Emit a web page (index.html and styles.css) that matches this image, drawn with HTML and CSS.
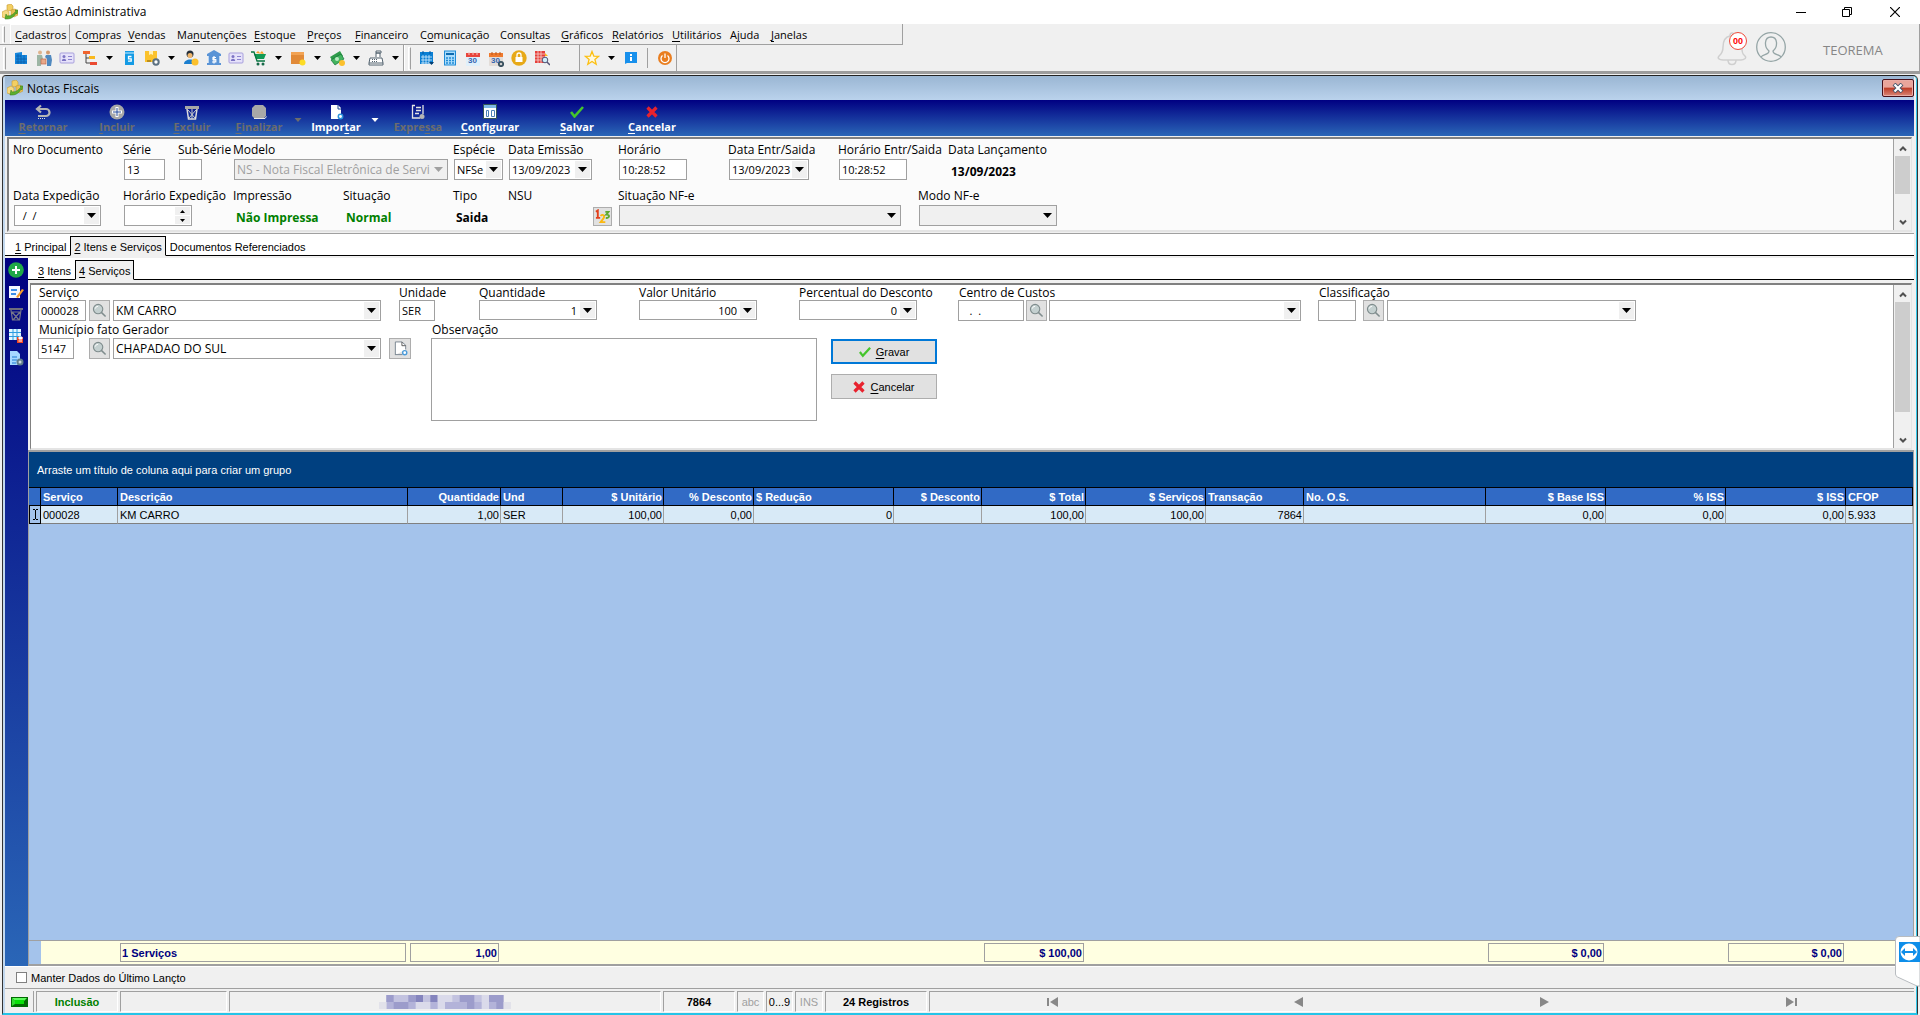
FILE: index.html
```html
<!DOCTYPE html>
<html lang="pt-BR">
<head>
<meta charset="utf-8">
<title>Gestão Administrativa</title>
<link rel="stylesheet" href="styles.css">
</head>
<body>
<svg class="defs" aria-hidden="true">
  <symbol id="app" viewBox="0 0 16 16"><path d="M5 1l4-1 2 2v4l-4 1-2-1z" fill="#f3cf63" stroke="#c79a30" stroke-width=".6"/><path d="M0 8l4-2 3 2v4l-4 2-3-1z" fill="#f6da82" stroke="#c79a30" stroke-width=".6"/><path d="M9 6l4-1 3 2v4l-4 2-3-2z" fill="#e9bf55" stroke="#c79a30" stroke-width=".6"/><path d="M3 15l1-5 1 2c4 0 7-2 9-5l-1-1h3l-1 4-1-1c-2 4-5 6-9 6z" fill="#5cae2c" stroke="#2f7a14" stroke-width=".5"/></symbol>
  <symbol id="down" viewBox="0 0 9 5"><path d="M0 0h9L4.500 5z" fill="currentColor"/></symbol>
  <symbol id="small-down" viewBox="0 0 7 4"><path d="M0 0h7L3.500 4z" fill="currentColor"/></symbol>
  <symbol id="up" viewBox="0 0 5 3"><path d="M0 3h5L2.500 0z" fill="currentColor"/></symbol>
  <symbol id="down5" viewBox="0 0 5 3"><path d="M0 0h5L2.500 3z" fill="currentColor"/></symbol>
  <symbol id="chev-up" viewBox="0 0 8 7"><path d="M1 5.500l3-3 3 3" fill="none" stroke="#505050" stroke-width="2"/></symbol>
  <symbol id="chev-down" viewBox="0 0 8 7"><path d="M1 1.500l3 3 3-3" fill="none" stroke="#505050" stroke-width="2"/></symbol>
  <symbol id="lens" viewBox="0 0 16 16"><circle cx="6.500" cy="6.500" r="5" fill="#c4d0d0" stroke="#7f8c8d" stroke-width="1.200"/><path d="M10 10l4.500 4.500" stroke="#7f8c8d" stroke-width="1.600"/><path d="M3.500 6a3 3 0 0 1 3-2.500" fill="none" stroke="#fff"/></symbol>
  <symbol id="check" viewBox="0 0 14 12"><path d="M1 6l3.500 4.500L13 1" fill="none" stroke="#45c52c" stroke-width="2.600"/></symbol>
  <symbol id="cross" viewBox="0 0 12 12"><path d="M1.500 1.500l9 9M10.500 1.500l-9 9" stroke="#e8222e" stroke-width="3.200"/></symbol>
  <symbol id="card" viewBox="0 0 16 16"><rect x="1" y="3" width="14" height="10" rx="1" fill="#e6e2fa" stroke="#a79fdc"/><circle cx="5" cy="6.500" r="1.500" fill="#7d74c4"/><path d="M2.800 11c0-3 4.400-3 4.400 0z" fill="#7d74c4"/><path d="M9 6.500h4M9 9.500h4" stroke="#8d84d0" stroke-width="1.200"/></symbol>
  <symbol id="calendar" viewBox="0 0 16 16"><rect x="1" y="3" width="14" height="12" rx="1" fill="#dff0fb"/><path d="M1 2h14v4H1z" fill="#e8453c"/><path d="M4 1v3M8 1v3M12 1v3" stroke="#f7c7c3"/></symbol>
  <symbol id="calendar-gear" viewBox="0 0 16 16"><rect x="1" y="3" width="14" height="12" rx="1" fill="#e3ddd8"/><path d="M1 2h14v4H1z" fill="#ef7a2e"/><path d="M4 1v3M8 1v3M12 1v3" stroke="#b9571c"/><circle cx="13" cy="13" r="2.200" fill="#ccc" stroke="#38505e" stroke-width="1.800"/></symbol>
</svg>

<header class="titlebar">
  <svg width="16" height="16"><use href="#app"/></svg>
  <h1>Gestão Administrativa</h1>
  <div class="winbuttons">
    <button aria-label="Minimizar"><svg width="10" height="10"><path d="M0 5.500h10" stroke="#000"/></svg></button>
    <button aria-label="Restaurar"><svg width="10" height="10"><path d="M.5 2.500h7v7h-7zM2.500 2V.5h7v7H8" fill="none" stroke="#000"/></svg></button>
    <button aria-label="Fechar"><svg width="10" height="10"><path d="M0 0l10 10M10 0L0 10" stroke="#000" stroke-width="1.200"/></svg></button>
  </div>
</header>

<div class="ribbon">
  <div class="bars">
    <nav class="menubar">
      <span class="grip"></span>
      <a href="#" class="current"><u>C</u>adastros</a><a href="#">Co<u>m</u>pras</a><a href="#"><u>V</u>endas</a><a href="#">Ma<u>n</u>utenções</a><a href="#"><u>E</u>stoque</a><a href="#"><u>P</u>reços</a><a href="#"><u>F</u>inanceiro</a><a href="#">C<u>o</u>municação</a><a href="#">Consu<u>l</u>tas</a><a href="#"><u>G</u>ráficos</a><a href="#"><u>R</u>elatórios</a><a href="#"><u>U</u>tilitários</a><a href="#">A<u>j</u>uda</a><a href="#"><u>J</u>anelas</a>
    </nav>
    <div class="toolbars">
      <div class="toolbar">
        <span class="grip"></span>
        <button aria-label="Empresas"><svg viewBox="0 0 16 16"><path d="M2 3l7-1v3h5v9H2z" fill="#1486dd"/><path d="M3 6h5M3 9h11M3 12h11M5 4v10M8 5v9M11 5v9" stroke="#0a5ea8" stroke-width=".8"/></svg></button>
        <button aria-label="Pessoas"><svg viewBox="0 0 16 16"><circle cx="4" cy="2.500" r="2" fill="#e0b48d"/><circle cx="12" cy="2.500" r="2" fill="#d49b70"/><path d="M1 5h5l1 4H5v7H1z" fill="#9db6a5"/><path d="M10 5h5l1 5-1 6h-4V9L9 7z" fill="#5089bf"/><rect x="5" y="9" width="5" height="5" fill="#e9a989" stroke="#c2684d" stroke-width=".7"/></svg></button>
        <button aria-label="Cadastro"><svg><use href="#card"/></svg></button>
        <button aria-label="Plano"><svg viewBox="0 0 16 16"><path d="M4 3v10h6M4 8h4" fill="none" stroke="#444"/><rect x="1" y="1" width="7" height="3" fill="#f0642d"/><rect x="7" y="6" width="6" height="3" fill="#f9b91f"/><rect x="8" y="12" width="7" height="3" fill="#ea4a31"/></svg></button>
        <button class="more" aria-label="Mais"><svg><use href="#small-down"/></svg></button>
        <button aria-label="Serviços"><svg viewBox="0 0 16 16"><rect x="4" y="1" width="9" height="14" fill="#149be5"/><path d="M4 3h9" stroke="#c9ecff"/><path d="M10.500 6.500H7.500v2.300h2.700v2.400H7" fill="none" stroke="#fff" stroke-width="1.300"/></svg></button>
        <button aria-label="Produtos"><svg viewBox="0 0 16 16"><path d="M1 1h12v11H1z" fill="#fbc22c"/><path d="M5 1h4v4l-2-1-2 1z" fill="#fff1b8"/><path d="M3 11h4" stroke="#7a5a10"/><circle cx="12" cy="12" r="2.700" fill="#fff" stroke="#5c7182" stroke-width="2"/></svg></button>
        <button class="more" aria-label="Mais"><svg><use href="#small-down"/></svg></button>
        <button aria-label="Vendedores"><svg viewBox="0 0 16 16"><circle cx="7" cy="4" r="3.500" fill="#26303b"/><circle cx="7" cy="5.500" r="2.500" fill="#f0b66c"/><path d="M1 14c0-6 12-6 12 0z" fill="#1c7fcf"/><circle cx="12" cy="12" r="3.500" fill="#fbc02d"/></svg></button>
        <button aria-label="Bancos"><svg viewBox="0 0 16 16"><path d="M8 0l7 4v2H1V4zM2 6h12v7H2zM1 13h14v2H1z" fill="#5a94d6"/><path d="M2.500 6v7M13.500 6v7" stroke="#bcd6f2"/><path d="M10 7.500H7v2.200h2.800V12H6M8 6v7.500" fill="none" stroke="#fff" stroke-width="1.200"/></svg></button>
        <button aria-label="Cartões"><svg><use href="#card"/></svg></button>
        <button aria-label="Compras"><svg viewBox="0 0 16 16"><path d="M5 3l2-2 2 2 2-2 2 3z" fill="#f4a12a"/><path d="M3 4h12l-2 5H5z" fill="#119a55"/><path d="M0 2h3l3 9h8" fill="none" stroke="#087541" stroke-width="1.300"/><circle cx="7" cy="14" r="1.500" fill="#176a49"/><circle cx="12" cy="14" r="1.500" fill="#176a49"/></svg></button>
        <button class="more" aria-label="Mais"><svg><use href="#small-down"/></svg></button>
        <button aria-label="Estoque"><svg viewBox="0 0 16 16"><path d="M1 2h13v12H1z" fill="#e18a38"/><path d="M1 2h13v3H1z" fill="#f2a354"/><circle cx="12.500" cy="12.500" r="3" fill="#fddc25"/></svg></button>
        <button class="more" aria-label="Mais"><svg><use href="#small-down"/></svg></button>
        <button aria-label="Financeiro"><svg viewBox="0 0 16 16"><path d="M1 7l10-6 3 5-9 7z" fill="#2e9b4a"/><path d="M2 10l10-6 3 5-9 6z" fill="#43b45f" stroke="#14733a" stroke-width=".7"/><circle cx="8" cy="9" r="2" fill="#b9ebc1"/><circle cx="13" cy="13" r="3" fill="#fbc02d"/></svg></button>
        <button class="more" aria-label="Mais"><svg><use href="#small-down"/></svg></button>
        <button aria-label="Caixa"><svg viewBox="0 0 16 16"><path d="M2 8h12l1 5v2H1v-2zM1 13h14" fill="#fff" stroke="#52626f"/><path d="M8 7V3h4v4M8 1h5v2H8z" fill="#fff" stroke="#52626f"/><path d="M4 9.500h6M4 11.500h6" stroke="#52626f" stroke-dasharray="1 1"/></svg></button>
        <button class="more" aria-label="Mais"><svg><use href="#small-down"/></svg></button>
      </div>
      <div class="toolbar second">
        <span class="grip"></span>
        <button aria-label="Agenda"><svg viewBox="0 0 16 16"><path d="M1 2h13v12H1z" fill="#0b7fd3"/><path d="M2 7h11M2 10h11M2 13h11M4 5v9M7 5v9M10 5v9" stroke="#d6efff" stroke-width=".8"/><path d="M4 1v3M11 1v3" stroke="#0758a0"/><path d="M10 12h5l-2.500 3z" fill="#063e70"/></svg></button>
        <button aria-label="Calculadora"><svg viewBox="0 0 16 16"><rect x="2.500" y="1" width="11" height="14" fill="#aadcfb" stroke="#1f8bd6"/><path d="M4 4h8" stroke="#0b6ab0" stroke-width="2"/><path d="M4 8h8M4 10.500h8M4 13h8" stroke="#1f8bd6" stroke-dasharray="2 1" stroke-width="1.300"/></svg></button>
        <button aria-label="Calendário" class="cal"><svg><use href="#calendar"/></svg><b>30</b></button>
        <button aria-label="Configurar calendário" class="cal"><svg><use href="#calendar-gear"/></svg><b>30</b></button>
        <button aria-label="Bloqueio"><svg viewBox="0 0 16 16"><circle cx="8" cy="8" r="7.700" fill="#e7a917"/><rect x="4.500" y="7" width="7" height="5" fill="#fff"/><path d="M6 7V5a2 2 0 0 1 4 0v2" fill="none" stroke="#fff" stroke-width="1.300"/></svg></button>
        <button aria-label="Pesquisa"><svg viewBox="0 0 16 16"><path d="M1 1h10v12H1z" fill="#e6403b"/><path d="M1 4h10M1 7h10M1 10h10M4 1v12M7 1v12" stroke="#f5d4d0" stroke-width=".8"/><path d="M11 3l3 3h-3z" fill="#fbb81f"/><circle cx="11" cy="10" r="2.800" fill="#cdeefa" stroke="#557"/><path d="M13 12l3 3" stroke="#557" stroke-width="1.500"/></svg></button>
      </div>
      <div class="toolbar third">
        <button aria-label="Favoritos"><svg viewBox="0 0 16 16"><path d="M8 1.500l1.800 4.600 4.900.2-3.800 3.100 1.300 4.800L8 11.500l-4.200 2.700 1.300-4.800L1.300 6.300l4.900-.2z" fill="#fff9df" stroke="#fcbf12" stroke-width="1.300"/></svg></button>
        <button class="more" aria-label="Mais"><svg><use href="#small-down"/></svg></button>
        <button aria-label="Informação"><svg viewBox="0 0 16 16"><path d="M2 2h12v11H4l-2 1z" fill="#1890ec"/><path d="M8 4v2M8 7v4" stroke="#fff" stroke-width="2"/></svg></button>
        <span class="sep"></span>
        <button aria-label="Sair"><svg viewBox="0 0 16 16"><circle cx="8" cy="8" r="7" fill="#e97e20"/><path d="M5.500 5.500a4 4 0 1 0 5 0M8 3.500V8" fill="none" stroke="#fff" stroke-width="1.300"/></svg></button>
      </div>
    </div>
  </div>
  <div class="account">
    <span class="bell"><svg width="30" height="34" viewBox="0 0 30 34"><path d="M13 4c0-4 4-4 4 0 6 1 8 6 8 12s1 6 3 8-1 4-4 4H6c-4 0-6-2-4-4s4-3 4-9 2-10 7-11z" fill="none" stroke="#cfcfcf" stroke-width="1.500"/><path d="M11 28c0 6 8 6 8 0" fill="none" stroke="#cfcfcf" stroke-width="1.500"/></svg><b>00</b></span>
    <svg width="30" height="30" viewBox="0 0 30 30"><circle cx="15" cy="15" r="14.300" fill="none" stroke="#95a5a6" stroke-width="1.300"/><path d="M5 25c2-3 8-2 8-6-5-4-5-14 2-14s7 10 2 14c0 4 6 3 8 6" fill="none" stroke="#95a5a6" stroke-width="1.300"/></svg>
    <span class="user">TEOREMA</span>
  </div>
</div>

<main class="window">
  <div class="caption">
    <svg width="16" height="16"><use href="#app"/></svg>
    <h2>Notas Fiscais</h2>
    <button class="close" aria-label="Fechar janela"><svg width="12" height="10" viewBox="0 0 12 10"><path d="M2 1l8 8M10 1L2 9" stroke="#46546a" stroke-width="4"/><path d="M2.500 1.500l7 7M9.500 1.500l-7 7" stroke="#fff" stroke-width="2.200"/></svg></button>
  </div>

  <div class="actions">
    <button disabled><svg viewBox="0 0 16 16"><path d="M2 5h9a3.500 3.500 0 0 1 0 7H3M6 1.500L2 5l4 3.500" fill="none" stroke="#b5b5b5" stroke-width="2.200"/><path d="M3 14.500h8" stroke="#ddd" stroke-dasharray="1 1"/></svg><span><u>R</u>etornar</span></button>
    <button disabled><svg viewBox="0 0 16 16"><circle cx="8" cy="8" r="7.500" fill="#a8a8a8"/><path d="M8 3v10M3 8h10" stroke="#fff" stroke-width="3"/><path d="M8 4v8M4 8h8" stroke="#244a9a"/></svg><span><u>I</u>ncluir</span></button>
    <button disabled><svg viewBox="0 0 16 16"><path d="M1 2h14v3H1z" fill="#a8a8a8"/><path d="M3 5l1.500 10h7L13 5" fill="none" stroke="#ddd" stroke-width="1.500"/><path d="M4 6l7 8M12 6l-7 8M8 5v10" stroke="#ccc"/></svg><span><u>E</u>xcluir</span></button>
    <button disabled><svg viewBox="0 0 16 16"><path d="M4 1h8l3 3v8l-2 2H3l-2-2V4z" fill="#a8a8a8"/><path d="M3 14.500h11l1.500-2" fill="none" stroke="#e8e8e8"/></svg><span><u>F</u>inalizar</span></button>
    <button disabled class="drop" aria-label="Opções de finalizar"><svg><use href="#small-down"/></svg></button>
    <button><svg viewBox="0 0 16 16"><path d="M3 1h7l3 3v11H3z" fill="#fff"/><path d="M10 1v4h3" fill="none" stroke="#1c4694"/><circle cx="12.500" cy="12.500" r="2.200" fill="#fff" stroke="#2b93db" stroke-width="1.500"/></svg><span>Impor<u>t</u>ar</span></button>
    <button class="drop" aria-label="Opções de importar"><svg><use href="#small-down"/></svg></button>
    <button disabled><svg viewBox="0 0 16 16"><path d="M2.500 1v13H10M2 1.500h3M13 1v9" fill="none" stroke="#e4e4e4" stroke-width="1.300"/><path d="M6 3.500h5M6 6.500h5M5 9.500h4" fill="none" stroke="#e4e4e4" stroke-width="1.300"/><circle cx="12" cy="12.500" r="2.500" fill="#b5b5b5"/></svg><span>Expre<u>s</u>sa</span></button>
    <button><svg viewBox="0 0 16 16"><path d="M1.500.5h13v14h-13z" fill="#fff" stroke="#355"/><path d="M2 1h12v3H2z" fill="#7fb7e6"/><path d="M4.500 6.500h2v6h-2zM9.500 6.500h3v6h-3z" fill="#fff" stroke="#4b81b7"/></svg><span><u>C</u>onfigurar</span></button>
    <button><svg viewBox="0 0 16 16"><use href="#check" x="1" y="2" width="14" height="12"/></svg><span><u>S</u>alvar</span></button>
    <button><svg viewBox="0 0 16 16"><use href="#cross" x="2" y="2" width="12" height="12"/></svg><span><u>C</u>ancelar</span></button>
  </div>

  <section class="panel head">
    <div class="headgrid">
      <div class="field c2"><label>Nro Documento</label></div>
      <div class="field"><label for="serie">Série</label><input class="box w41" id="serie" value="13"></div>
      <div class="field"><label for="sub">Sub-Série</label><input class="box w23" id="sub"></div>
      <div class="field c4"><label for="modelo">Modelo</label><div class="box combo off w214"><select id="modelo" disabled><option>NS - Nota Fiscal Eletrônica de Serviço</option></select><i><svg><use href="#down"/></svg></i></div></div>
      <div class="field"><label for="especie">Espécie</label><div class="box combo w49"><select id="especie"><option>NFSe</option></select><i><svg><use href="#down"/></svg></i></div></div>
      <div class="field c2"><label for="emissao">Data Emissão</label><div class="box combo w83"><input id="emissao" value="13/09/2023"><button aria-label="Abrir calendário"><svg><use href="#down"/></svg></button></div></div>
      <div class="field c2"><label for="hora">Horário</label><input class="box w68" id="hora" value="10:28:52"></div>
      <div class="field c2"><label for="entr">Data Entr/Saida</label><div class="box combo w80"><input id="entr" value="13/09/2023"><button aria-label="Abrir calendário"><svg><use href="#down"/></svg></button></div></div>
      <div class="field c2"><label for="hentr">Horário Entr/Saida</label><input class="box w68" id="hentr" value="10:28:52"></div>
      <div class="field c2"><label>Data Lançamento</label><output class="black">13/09/2023</output></div>

      <div class="field c2 newrow"><label for="exped">Data Expedição</label><div class="box combo w87"><input id="exped" value="&nbsp; / &nbsp;/"><button aria-label="Abrir calendário"><svg><use href="#down"/></svg></button></div></div>
      <div class="field c2"><label for="hexp">Horário Expedição</label><div class="box combo w68"><input id="hexp"><span class="spin"><button aria-label="Aumentar"><svg><use href="#up"/></svg></button><button aria-label="Diminuir"><svg><use href="#down5"/></svg></button></span></div></div>
      <div class="field c2"><label>Impressão</label><output class="clip">Não Impressa</output></div>
      <div class="field c2"><label>Situação</label><output>Normal</output></div>
      <div class="field"><label>Tipo</label><output class="black">Saida</output></div>
      <div class="field c2"><label>NSU</label><button class="square nsu" aria-label="Gerar número"><svg viewBox="0 0 16 16"><path d="M1 3l2-1.500V10M1 9.500h4.500" fill="none" stroke="#e2401c" stroke-width="2"/><path d="M6 7.500c2-3 5 0 3 2.500L6 14h5" fill="none" stroke="#fbb80f" stroke-width="2"/><path d="M11 3h3.500L12 6c4-.5 4 4-.5 3.500" fill="none" stroke="#5fa82f" stroke-width="2"/></svg></button></div>
      <div class="field c5"><label for="snfe">Situação NF-e</label><div class="box combo gray w282"><select id="snfe"><option></option></select><i><svg><use href="#down"/></svg></i></div></div>
      <div class="field c3 modo"><label for="mnfe">Modo NF-e</label><div class="box combo gray w138"><select id="mnfe"><option></option></select><i><svg><use href="#down"/></svg></i></div></div>
    </div>
    <div class="scroll"><svg><use href="#chev-up"/></svg><span class="thumb t38"></span><svg><use href="#chev-down"/></svg></div>
  </section>

  <nav class="tabs"><a href="#"><u>1</u> Principal</a><a href="#" class="on"><u>2</u> Itens e Serviços</a><a href="#">Documentos Referenciados</a></nav>

  <div class="work">
    <aside class="side">
      <button aria-label="Incluir"><svg viewBox="0 0 16 16"><circle cx="8" cy="8" r="7.800" fill="#20a847"/><path d="M8 4v8M4 8h8" stroke="#fff" stroke-width="2"/></svg></button>
      <button aria-label="Editar"><svg viewBox="0 0 16 16"><path d="M1 2h11v12H1z" fill="#f3f8ff"/><path d="M3 6h6M3 10h5" stroke="#3b8ee8" stroke-width="2"/><path d="M8 13l6-8 2 1-6 8z" fill="#f39b29"/></svg></button>
      <button aria-label="Excluir"><svg viewBox="0 0 16 16"><path d="M1 2h14v2H1z" fill="#6e6e7c"/><path d="M3 4l1.500 10h7L13 4M4 6l7 8M12 6l-7 8M4 6h8" fill="none" stroke="#77778a" stroke-width="1.200"/></svg></button>
      <button aria-label="Salvar grade"><svg viewBox="0 0 16 16"><path d="M1 1h12v11H1z" fill="#e2f5ff"/><path d="M1 4.500h12M1 8.500h12M5 1v11M9 1v11" stroke="#2d9be0"/><path d="M9 9h6v6H9z" fill="#f0441f"/><path d="M11 9h3v2h-3zM10.500 13h3.500" stroke="#fff" fill="#fff"/></svg></button>
      <button aria-label="Configurar"><svg viewBox="0 0 16 16"><path d="M2 1h7l3 3v11H2z" fill="#a5d8ff"/><path d="M4 7h5M4 10h5M4 13h4" stroke="#1c7bd1" stroke-width="1.200"/><circle cx="12" cy="12" r="2.500" fill="#cfd8dc" stroke="#607d8b" stroke-width="2"/></svg></button>
    </aside>
    <div class="content">
      <nav class="tabs sub"><a href="#"><u>3</u> Itens</a><a href="#" class="on"><u>4</u> Serviços</a></nav>
      <section class="panel form">
        <div class="formbody">
          <div class="formgrid">
            <div class="field g9"><label for="serv">Serviço</label><div class="row"><span class="code"><input class="box w48" id="serv" value="000028"></span><button class="square" aria-label="Pesquisar serviço"><svg><use href="#lens"/></svg></button><div class="box combo w268 big"><select aria-label="Descrição do serviço"><option>KM CARRO</option></select><i><svg><use href="#down"/></svg></i></div></div></div>
            <div class="field g2"><label for="un">Unidade</label><input class="box w36" id="un" value="SER"></div>
            <div class="field g4"><label for="qtd">Quantidade</label><div class="box combo num w118"><input id="qtd" value="1"><button aria-label="Calculadora"><svg><use href="#down"/></svg></button></div></div>
            <div class="field g4"><label for="vu">Valor Unitário</label><div class="box combo num w118"><input id="vu" value="100"><button aria-label="Calculadora"><svg><use href="#down"/></svg></button></div></div>
            <div class="field g4"><label for="pd">Percentual do Desconto</label><div class="box combo num w118"><input id="pd" value="0"><button aria-label="Calculadora"><svg><use href="#down"/></svg></button></div></div>
            <div class="field g9"><label for="cc">Centro de Custos</label><div class="row tight"><input class="box w66" id="cc" value="&nbsp;&nbsp; . &nbsp;."><button class="square" aria-label="Pesquisar centro"><svg><use href="#lens"/></svg></button><div class="box combo w252"><select aria-label="Descrição do centro"><option></option></select><i><svg><use href="#down"/></svg></i></div></div></div>
            <div class="field g8"><label for="cl">Classificação</label><div class="row"><span class="code short"><input class="box w38" id="cl"></span><button class="square" aria-label="Pesquisar classificação"><svg><use href="#lens"/></svg></button><div class="box combo w249"><select aria-label="Descrição da classificação"><option></option></select><i><svg><use href="#down"/></svg></i></div></div></div>
          </div>
          <div class="formrow">
            <div class="field city"><label for="mun">Município fato Gerador</label><div class="row"><span class="code"><input class="box w36" id="mun" value="5147"></span><button class="square" aria-label="Pesquisar município"><svg><use href="#lens"/></svg></button><div class="box combo w268 big"><select aria-label="Nome do município"><option>CHAPADAO DO SUL</option></select><i><svg><use href="#down"/></svg></i></div><button class="square newdoc" aria-label="Novo município"><svg viewBox="0 0 16 16"><path d="M2.500 15V1h7l4 3.500V9M2.500 14.500H10" fill="#fff" stroke="#77838f"/><path d="M9.500 1v4h4" fill="none" stroke="#555"/><circle cx="12.500" cy="12.500" r="2.200" fill="#fff" stroke="#4b9bd9" stroke-width="1.500"/></svg></button></div></div>
            <div class="field"><label for="obs">Observação</label><textarea class="box" id="obs"></textarea></div>
            <div class="confirm">
              <button class="primary"><svg width="12" height="12"><use href="#check"/></svg><span><u>G</u>ravar</span></button>
              <button><svg width="12" height="12"><use href="#cross"/></svg><span><u>C</u>ancelar</span></button>
            </div>
          </div>
        </div>
        <div class="scroll"><svg><use href="#chev-up"/></svg><span class="thumb t110"></span><svg><use href="#chev-down"/></svg></div>
      </section>

      <section class="data">
        <p class="group">Arraste um título de coluna aqui para criar um grupo</p>
        <table class="items">
          <colgroup><col class="k0"><col class="k1"><col class="k2"><col class="k3"><col class="k4"><col class="k5"><col class="k6"><col class="k7"><col class="k8"><col class="k9"><col class="k10"><col class="k11"><col class="k12"><col class="k10"><col class="k10"><col class="k10"><col></colgroup>
          <thead><tr><th></th><th>Serviço</th><th>Descrição</th><th class="r">Quantidade</th><th>Und</th><th class="r">$ Unitário</th><th class="r">% Desconto</th><th>$ Redução</th><th class="r">$ Desconto</th><th class="r">$ Total</th><th class="r">$ Serviços</th><th>Transação</th><th>No. O.S.</th><th class="r">$ Base ISS</th><th class="r">% ISS</th><th class="r">$ ISS</th><th>CFOP</th></tr></thead>
          <tbody><tr><td class="mark"><svg width="7" height="11"><path d="M1 .5h2M4 .5h2M3.500 1v9M1 10.500h2M4 10.500h2" stroke="#000"/></svg></td><td>000028</td><td>KM CARRO</td><td class="r">1,00</td><td>SER</td><td class="r">100,00</td><td class="r">0,00</td><td class="r">0</td><td></td><td class="r">100,00</td><td class="r">100,00</td><td class="r">7864</td><td></td><td class="r">0,00</td><td class="r">0,00</td><td class="r">0,00</td><td>5.933</td></tr></tbody>
        </table>
        <div class="blank"></div>
        <table class="totals">
          <colgroup><col class="k0"><col class="k1"><col class="k2"><col class="k3"><col class="k4"><col class="k5"><col class="k6"><col class="k7"><col class="k8"><col class="k9"><col class="k10"><col class="k11"><col class="k12"><col class="k10"><col class="k10"><col class="k10"><col></colgroup>
          <tbody><tr><td class="mark"></td><td></td><td><div>1 Serviços</div></td><td class="r"><div>1,00</div></td><td></td><td></td><td></td><td></td><td></td><td class="r"><div>$ 100,00</div></td><td></td><td></td><td></td><td class="r"><div>$ 0,00</div></td><td></td><td class="r"><div>$ 0,00</div></td><td></td></tr></tbody>
        </table>
      </section>
    </div>
  </div>

  <div class="keep"><label><input type="checkbox">Manter Dados do Último Lançto</label></div>

  <footer class="status">
    <span class="led"><svg width="17" height="10"><path d="M0 0h17v10H0z" fill="#006b00"/><path d="M1 1h15l-3 3H4z" fill="#5dfa5d"/><path d="M1 1l3 3v3l-3 2z" fill="#2fdc2f"/><path d="M4 3h9v4H4z" fill="#08e008"/></svg></span>
    <span class="cell s1">Inclusão</span>
    <span class="cell s2"></span>
    <span class="cell s3"><svg width="132" height="14" viewBox="0 0 126 14" preserveAspectRatio="none"><path d="M7 0h111v7H7z" fill="#c3c3e0"/><path d="M7 7h111v7H7z" fill="#b3b3d9"/><path d="M7 0h7v7H7zM28 0h7v7h-7zM77 0h14v7H77zM105 0h14v7h-14zM14 7h14v7H14zM84 7h7v7h-7zM112 7h7v7h-7z" fill="#9c9ccb"/><path d="M35 0h7v7h-7zM49 0h7v7h-7z" fill="#8484bd"/><path d="M56 0h14v7H56zM98 0h7v7h-7zM35 7h14v7H35zM56 7h7v7h-7zM98 7h7v7h-7z" fill="#dadaea"/><path d="M0 7h7v7H0zM119 7h7v7h-7z" fill="#e2e2ea"/></svg></span>
    <span class="cell s4">7864</span>
    <span class="cell s5 dim">abc</span>
    <span class="cell s5 plain">0...9</span>
    <span class="cell s6 dim">INS</span>
    <span class="cell s7">24 Registros</span>
    <span class="cell pager">
      <button aria-label="Primeiro"><svg width="12" height="10"><path d="M1 1v8" stroke="#888" stroke-width="2"/><path d="M11 0v10L3 5z" fill="#888"/></svg></button>
      <button aria-label="Anterior"><svg width="10" height="10"><path d="M9 0v10L0 5z" fill="#888"/></svg></button>
      <button aria-label="Próximo"><svg width="10" height="10"><path d="M0 0v10l9-5z" fill="#888"/></svg></button>
      <button aria-label="Último"><svg width="12" height="10"><path d="M11 1v8" stroke="#888" stroke-width="2"/><path d="M1 0v10l8-5z" fill="#888"/></svg></button>
    </span>
  </footer>
</main>

<button class="remote" aria-label="Acesso remoto"><svg width="25" height="51" viewBox="0 0 25 51"><path d="M25 .5H4Q.5.500.5 4V38q0 2 2 3L22 50h3z" fill="#fff" stroke="#b8bcc0"/><path d="M4 6h21v20H4z" fill="#0e8ee9"/><circle cx="14" cy="16" r="8.500" fill="#fff"/><path d="M6 16l4-4v3h8v-3l4 4-4 4v-3h-8v3z" fill="#0e8ee9"/></svg></button>
</body>
</html>
```
FILE: styles.css
```css
* { box-sizing: border-box; }
html, body { height: 100%; }
body {
  margin: 0;
  min-height: 720px;
  display: flex;
  flex-direction: column;
  overflow: hidden;
  background: #f0f0f0;
  color: #000;
  font: 12px/16px "Open Sans", "Noto Sans", sans-serif;
}
h1, h2, p { margin: 0; font-size: inherit; font-weight: normal; }
button, input, select, textarea { font: inherit; color: inherit; margin: 0; padding: 0; border: 0; background: none; }
button { display: flex; align-items: center; justify-content: center; }
input, select { min-width: 0; outline: 0; appearance: none; }
a { color: inherit; text-decoration: none; }
svg { display: block; flex: none; }
u { text-underline-offset: 2px; }
.defs { position: absolute; width: 0; height: 0; }

/* Application title bar */
.titlebar { display: flex; flex: none; align-items: center; gap: 5px; height: 24px; padding-left: 2px; background: #fff; }
.winbuttons { display: flex; margin-left: auto; height: 20px; }
.winbuttons button { width: 46px; }
.winbuttons button:last-child { width: 50px; }

/* Menu and toolbars */
.ribbon { display: flex; flex: none; justify-content: space-between; height: 50px; border-bottom: 3px solid #9c9c9c; }
.grip { width: 3px; margin: 2px 0 1px; border: 1px solid #fff; border-right-color: #a0a0a0; }
.menubar {
  display: grid;
  grid-template-columns: 8px 60px 53px 49px 77px 53px 48px 65px 80px 61px 51px 60px 58px 41px 1fr;
  width: 903px;
  height: 21px;
  padding-left: 2px;
  border-right: 1px solid #a0a0a0;
  border-bottom: 1px solid #a0a0a0;
  font: 11px/22px "Open Sans", "Noto Sans", sans-serif;
}
.menubar a { height: 20px; padding-left: 4px; border-left: 1px solid transparent; white-space: nowrap; }
.menubar .current { border-left-color: #fff; border-right: 1px solid #a0a0a0; border-top: 1px solid #fff; line-height: 20px; }
.toolbars { display: flex; width: 677px; height: 26px; }
.toolbar { display: flex; align-items: center; padding-left: 3px; border-right: 1px solid #a0a0a0; }
.toolbar .grip { align-self: stretch; margin-right: 4px; }
.toolbar button { width: 23px; height: 24px; }
.toolbar svg { width: 16px; height: 16px; }
.toolbar .more { width: 16px; }
.toolbar .more svg, .drop svg { width: 7px; height: 4px; }
.toolbar:first-child { width: 404px; }
.toolbar.second { flex: 1; border-left: 1px solid #fff; }
.toolbar.third { width: 97px; padding-left: 0; }
.cal { flex-direction: column; }
.cal b { height: 8px; margin-top: -10px; font: bold 8px/8px "Liberation Sans", sans-serif; color: #3465b0; }
.sep { width: 1px; height: 20px; margin: 0 5px; background: #a0a0a0; }
.account { display: flex; align-items: flex-start; padding: 8px 37px 0 0; border-right: 1px solid #a0a0a0; }
.bell { position: relative; width: 39px; }
.bell b { position: absolute; left: 12px; top: 0; width: 18px; height: 18px; border: 1px solid #ee4b3b; border-radius: 9px; background: #fff; color: #f00; font: bold 9px/16px "Liberation Sans", sans-serif; text-align: center; }
.user { width: 96px; padding: 8px 0 0 37px; color: #868686; font-size: 13px; line-height: 20px; }

/* Child window */
.window { flex: 1; display: flex; flex-direction: column; min-height: 0; margin: 1px 2px 0 2px; border: 1px solid #333; border-top-color: #222; border-bottom: 2px solid #25c4e8; box-shadow: inset 2px 0 #c2d8ee, inset -1px 0 #35c9ea; padding: 0 3px 0 2px; background: #f0f0f0; border-radius: 4px 5px 0 0; }
.caption { display: flex; flex: none; align-items: center; gap: 4px; height: 24px; padding: 0 0 0 2px; background: linear-gradient(#9ab6d3, #bad2ec); }
.caption h2 { padding-top: 2px; }
.close { margin-left: auto; width: 32px; height: 18px; border: 1px solid #47101a; border-radius: 2px; background: linear-gradient(#e9a59b 0 45%, #bd3b25 50%, #d98777); box-shadow: inset 0 0 0 1px #e9aca5; }
.actions { display: flex; flex: none; height: 36px; padding-left: 1px; background: linear-gradient(#000082, #2a66b7); color: #fff; font: bold 11px/14px "Open Sans", "Noto Sans", sans-serif; }
.actions button { flex-direction: column; justify-content: flex-start; width: 74px; padding-top: 4px; }
.actions button:nth-child(3) { width: 76px; }
.actions button:nth-child(4) { width: 58px; }
.actions button:nth-child(6) { width: 58px; }
.actions button:nth-child(8) { width: 68px; }
.actions button:nth-child(9) { width: 76px; }
.actions button:nth-child(10) { width: 98px; }
.actions button:nth-child(11) { width: 52px; }
.actions button svg { width: 16px; height: 16px; }
.actions button:disabled { color: #6d6d6d; }
.actions .drop { width: 19px; padding-top: 18px; }
.actions .drop svg { width: 8px; height: 4px; }

.panel { display: flex; flex: none; border-style: solid; border-width: 2px 1px 2px 2px; border-color: #808080 #e4e4e4 #e4e4e4 #808080; }
.head { margin: 1px 2px 1px 2px; height: 95px; background: #fbfbfb; }
.headgrid { flex: 1; display: grid; grid-template-columns: repeat(auto-fill, 55px); grid-auto-rows: 39px; row-gap: 7px; align-content: start; padding: 2px 0 0 4px; }
.field { display: flex; flex-direction: column; align-items: flex-start; white-space: nowrap; min-width: 0; }
.field > label { height: 18px; line-height: 18px; }
.c2 { grid-column-end: span 2; }
.c3 { grid-column-end: span 3; }
.c4 { grid-column-end: span 4; }
.c5 { grid-column-end: span 5; }
.newrow { grid-column-start: 1; }
.modo { margin-left: 25px; }
.box { height: 21px; border: 1px solid #a0a0a0; background: #fff; margin-left: 1px; padding: 0 2px; font-size: 11px; }
.combo { display: flex; padding: 1px; }
.combo > select, .combo > input { flex: 1; width: 0; height: 100%; padding: 0 1px; }
.combo > i, .combo > button { flex: none; display: flex; align-items: center; justify-content: center; width: 15px; background: #f0f0f0; }
.combo > i svg, .combo > button svg { width: 9px; height: 5px; }
.gray, .off { background: #f0f0f0; }
.off, .off select { color: #a0a0a0; opacity: 1; }
.num { height: 20px; }
.num input { text-align: right; padding-right: 3px; }
.big, .off { font-size: 12px; }
.spin { display: flex; flex-direction: column; gap: 1px; width: 15px; }
.spin button { flex: 1; background: #f0f0f0; }
.spin svg { width: 5px; height: 3px; }
output { padding: 4px 0 0 3px; color: #008000; font: bold 12px/18px "Open Sans", "Noto Sans", sans-serif; }
.black { color: #000; }
.clip { width: 89px; overflow: hidden; }
.square { flex: none; width: 21px; height: 21px; border: 1px solid #adadad; background: #e1e1e1; }
.square svg { width: 15px; height: 15px; }
.nsu { width: 19px; height: 19px; margin: 2px 0 0 85px; }
.w23 { width: 23px; } .w36 { width: 36px; } .w38 { width: 38px; } .w41 { width: 41px; }
.w48 { width: 48px; } .w49 { width: 49px; } .w66 { width: 66px; } .w68 { width: 68px; }
.w80 { width: 80px; } .w83 { width: 83px; } .w87 { width: 87px; } .w118 { width: 118px; }
.w138 { width: 138px; } .w214 { width: 214px; } .w249 { width: 249px; } .w252 { width: 252px; }
.w268 { width: 268px; } .w282 { width: 282px; }

.scroll { display: flex; flex: none; flex-direction: column; align-items: center; width: 18px; padding: 6px 0 4px; border-left: 1px solid #a0a0a0; background: #f0f0f0; }
.scroll svg { width: 8px; height: 7px; }
.scroll svg:last-child { margin-top: auto; }
.thumb { width: 15px; margin-top: 4px; background: #cdcdcd; }
.t38 { height: 38px; }
.t110 { height: 110px; }

.tabs { display: flex; flex: none; align-items: flex-end; height: 23px; padding-left: 6px; border-top: 1px solid #a0a0a0; background: #fff linear-gradient(#000, #000) 0 100% / 100% 1px no-repeat; font: 11px/14px "Liberation Sans", Arial, sans-serif; }
.tabs a { height: 20px; padding: 4px 4px 0; }
.tabs .on { border: 1px solid #000; border-bottom-color: #f0f0f0; background: #f0f0f0; padding: 3px 3px 0; }
.sub { height: 22px; border-top: 0; }

.work { flex: 1; display: flex; min-height: 0; margin-top: 2px; }
.side { display: flex; flex: none; flex-direction: column; align-items: center; gap: 6px; width: 23px; padding: 4px 1px 0 0; background: linear-gradient(#000080, #2a66b7); }
.side svg { width: 16px; height: 16px; }
.content { flex: 1; display: flex; flex-direction: column; min-width: 0; }
.form { margin: 3px 2px 0 2px; height: 167px; background: #fff; border-left-width: 1px; }
.formbody { flex: 1; padding: 0 0 0 7px; min-width: 0; }
.formgrid { display: grid; grid-template-columns: repeat(auto-fill, 40px); }
.form .field > label { padding-left: 1px; }
.formgrid > .field > label { height: 15px; line-height: 15px; }
.g2 { grid-column-end: span 2; } .g4 { grid-column-end: span 4; } .g8 { grid-column-end: span 8; } .g9 { grid-column-end: span 9; }
.row { display: flex; gap: 3px; }
.row .box { margin-left: 0; }
.tight { gap: 2px; }
.code { width: 48px; }
.code.short { width: 42px; }
.formrow { display: flex; }
.formrow > .field > label { height: 17px; line-height: 17px; }
.city { width: 393px; }
.newdoc { width: 22px; margin-left: 5px; }
textarea.box { display: block; width: 386px; height: 83px; margin: 0; resize: none; outline: 0; }
.confirm { display: flex; flex-direction: column; gap: 10px; padding: 18px 0 0 14px; }
.confirm button { width: 106px; height: 25px; gap: 5px; border: 1px solid #adadad; background: #e1e1e1; font: 11px/14px "Liberation Sans", Arial, sans-serif; }
.confirm .primary { border: 2px solid #0078d7; }

/* Grid */
.data { flex: 1; display: flex; flex-direction: column; min-height: 0; border: solid #a0a0a0; border-width: 2px 1px 2px 1px; font: 11px/14px "Liberation Sans", Arial, sans-serif; }
.group { flex: none; height: 35px; padding: 11px 8px; background: #004080; color: #fff; }
table { flex: none; width: 100%; table-layout: fixed; border-collapse: separate; border-spacing: 0; }
.k0 { width: 12px; } .k1 { width: 77px; } .k2 { width: 290px; } .k3 { width: 93px; } .k4 { width: 62px; } .k5 { width: 101px; } .k6 { width: 90px; } .k7 { width: 140px; } .k8 { width: 88px; } .k9 { width: 104px; } .k10 { width: 120px; } .k11 { width: 98px; } .k12 { width: 182px; }
th, td { overflow: hidden; white-space: nowrap; text-align: left; }
th { height: 19px; padding: 0 1px 0 2px; border: solid #000; border-width: 1px 1px 1px 0; background: #316ac5; color: #fff; }
.items td { height: 18px; padding: 0 1px 0 2px; border-right: 1px solid #a0a0a0; border-bottom: 1px solid #808080; background: #d8eaf7; }
.items .mark { padding: 0 2px; border: 1px solid #000; border-top: 0; background: #a4c3eb; }
.items .r, .totals .r { text-align: right; }
.blank { flex: 1; background: #a4c3eb; }
.totals { border-top: 1px solid #a0a0a0; background: #ffffe1; color: #000080; font-weight: bold; }
.totals td { height: 23px; padding: 2px 2px 2px 2px; }
.totals div { height: 19px; padding: 2px 1px; border: 1px solid #a0a0a0; }
.totals .mark { background: #a4c3eb; }

.keep { display: flex; flex: none; align-items: center; height: 23px; padding-left: 11px; border-top: 1px solid #fff; border-bottom: 1px solid #a0a0a0; font: 11px/14px "Liberation Sans", Arial, sans-serif; }
.keep label { display: flex; align-items: center; gap: 4px; }
.keep input { width: 11px; height: 11px; border: 1px solid #808080; background: #fff; }
.status { display: flex; flex: none; gap: 2px; height: 24px; padding: 2px 0 1px; font: bold 11px/14px "Liberation Sans", Arial, sans-serif; }
.led, .cell { display: flex; align-items: center; justify-content: center; }
.led { width: 29px; border-right: 1px solid #a0a0a0; }
.cell { border: 1px solid #a0a0a0; border-right-color: #fff; border-bottom-color: #fff; }
.s1 { width: 82px; color: #008000; } .s2 { width: 107px; } .s3 { width: 432px; } .s4 { width: 72px; } .s5 { width: 27px; } .s6 { width: 28px; } .s7 { width: 102px; }
.dim { color: #a0a0a0; font-weight: normal; }
.plain { font-weight: normal; }
.pager { flex: 1; border-right: 0; }
.pager button { flex: 1; height: 100%; }
.remote { position: absolute; right: 0; bottom: 28px; }
```
